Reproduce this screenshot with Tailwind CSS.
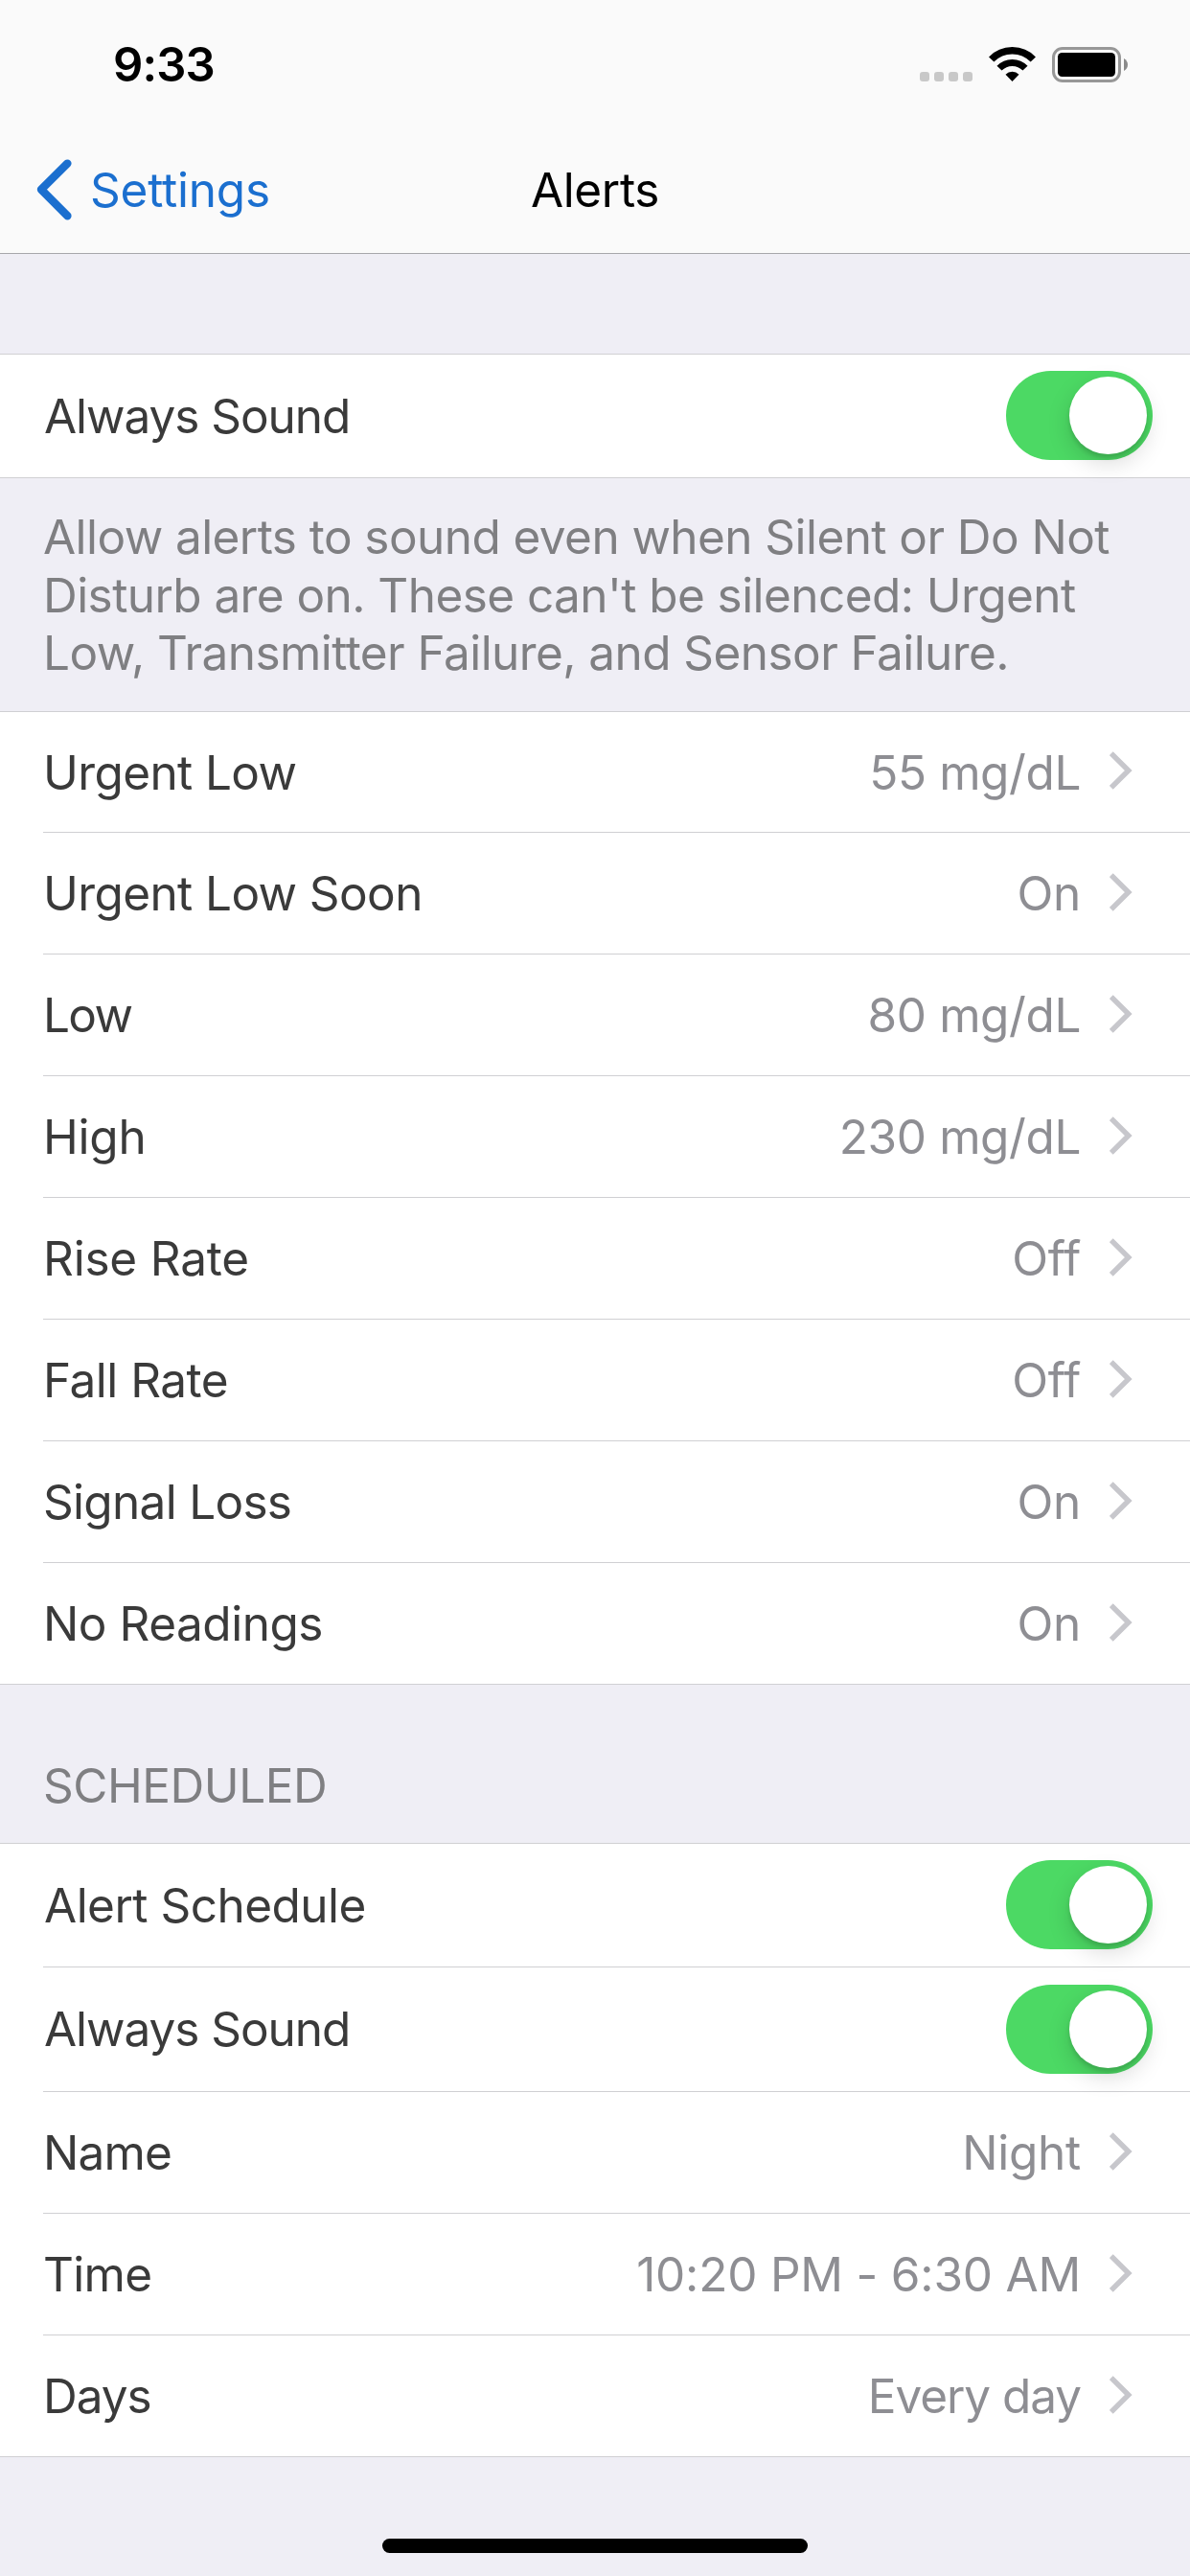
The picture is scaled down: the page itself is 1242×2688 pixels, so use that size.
<!DOCTYPE html>
<html lang="en">
  <head>
    <meta charset="UTF-8" />
    <title>Alerts</title>
    <meta name="viewport" content="width=device-width, initial-scale=1.0" />
    <script src="https://cdn.jsdelivr.net/npm/@tailwindcss/browser@4"></script>
  </head>

  <body
    class="bg-[#efeef5] text-[49.5px] text-[#3a3a3a]"
    style="font-family: Inter, 'Liberation Sans', sans-serif"
  >
    <!-- Shared icons -->
    <svg class="hidden">
      <symbol id="chevron" viewBox="0 0 24 40">
        <path d="M1.8 2.2 L19.8 20 L1.8 37.8" fill="none" stroke="#c7c7cc" stroke-width="5.4" />
      </symbol>
    </svg>

    <div class="w-[1242px] h-[2688px] flex flex-col overflow-hidden whitespace-nowrap">
      <!-- Header -->
      <header class="h-[265px] shrink-0 bg-[#fafafa] border-b border-[#a7a7ab] text-black">
        <div class="h-[132px] flex items-start justify-between pt-[49px] pl-[118px] pr-[65px]">
          <span class="text-[49px] leading-[38px] font-semibold tracking-[-0.9px]">9:33</span>
          <div class="flex">
            <div class="flex gap-[5px] pt-[26px]">
              <i class="size-[10px] rounded-[3px] bg-[#c8c8c8]"></i>
              <i class="size-[10px] rounded-[3px] bg-[#c8c8c8]"></i>
              <i class="size-[10px] rounded-[3px] bg-[#c8c8c8]"></i>
              <i class="size-[10px] rounded-[3px] bg-[#c8c8c8]"></i>
            </div>
            <svg class="ml-[17px] w-[49px] h-[37px]" viewBox="0 0 49 37">
              <path d="M2.7 13 A30.2 30.2 0 0 1 46.3 13" fill="none" stroke="#000" stroke-width="7.4" />
              <path d="M11 22.2 A18.6 18.6 0 0 1 38 22.2" fill="none" stroke="#000" stroke-width="7" />
              <path d="M17.5 28.8 A9.6 9.6 0 0 1 31.5 28.8 L24.5 36 Z" />
            </svg>
            <svg class="ml-[17px] w-[79px] h-[37px]" viewBox="0 0 79 37">
              <rect x="1.5" y="1.5" width="69" height="34" rx="9.5" fill="none" stroke="#979797" stroke-width="3" />
              <rect x="6" y="6" width="60" height="25" rx="4.5" />
              <path d="M75 12 Q79 14.5 79 18.5 Q79 22.5 75 25 Z" fill="#8a8a8a" />
            </svg>
          </div>
        </div>
        <div class="h-[132px] grid grid-cols-[1fr_auto_1fr] items-center">
          <a class="flex items-center pl-[38px] text-[#1b6fcf]">
            <svg class="w-[38px] h-[64px]" viewBox="0 0 38 64">
              <path d="M32.4 4.6 L5 31.8 L32.4 59.2" fill="none" stroke="#1b6fcf" stroke-width="8.4" stroke-linecap="round" stroke-linejoin="round" />
            </svg>
            <span class="ml-[18px] tracking-[-0.2px]">Settings</span>
          </a>
          <h1 class="tracking-[-0.36px]">Alerts</h1>
        </div>
      </header>

      <!-- Always Sound -->
      <section class="mt-[104px] shrink-0 bg-white border-y border-[#d0d0d3]">
        <div class="h-[128px] flex items-center justify-between pl-[46px] pr-[39px]">
          <span class="tracking-[-1.05px]">Always Sound</span>
          <div class="mb-px w-[153px] h-[93px] rounded-full bg-[#4cd964] p-[6px] flex justify-end">
            <span class="size-[81px] rounded-full bg-white shadow-[0_9px_24px_rgba(0,0,0,0.15),0_4px_4px_rgba(0,0,0,0.12)]"></span>
          </div>
        </div>
      </section>
      <p class="h-[243px] shrink-0 pt-[31px] pl-[45px] leading-[60.5px] tracking-[-0.57px] text-[#7f7f82]">
        Allow alerts to sound even when Silent or Do Not<br />
        Disturb are on. These can't be silenced: Urgent<br />
        Low, Transmitter Failure, and Sensor Failure.
      </p>

      <!-- Alert list -->
      <ul class="shrink-0 bg-white border-y border-[#d0d0d3]">
        <li class="pl-[45px]">
          <div class="h-[126px] flex items-center border-b border-[#d0d0d3] pt-px pr-[60px]">
            <span class="tracking-[-0.62px]">Urgent Low</span>
            <span class="ml-auto tracking-[-0.4px] text-[#8e8e93]">55 mg/dL</span>
            <svg class="ml-[30px] mb-1 w-[24px] h-[40px]"><use href="#chevron" /></svg>
          </div>
        </li>
        <li class="pl-[45px]">
          <div class="h-[127px] flex items-center border-b border-[#d0d0d3] pt-px pr-[60px]">
            <span class="tracking-[-0.6px]">Urgent Low Soon</span>
            <span class="ml-auto tracking-[-0.25px] text-[#8e8e93]">On</span>
            <svg class="ml-[30px] mb-1 w-[24px] h-[40px]"><use href="#chevron" /></svg>
          </div>
        </li>
        <li class="pl-[45px]">
          <div class="h-[127px] flex items-center border-b border-[#d0d0d3] pt-px pr-[60px]">
            <span class="tracking-[-1.7px]">Low</span>
            <span class="ml-auto tracking-[-0.4px] text-[#8e8e93]">80 mg/dL</span>
            <svg class="ml-[30px] mb-1 w-[24px] h-[40px]"><use href="#chevron" /></svg>
          </div>
        </li>
        <li class="pl-[45px]">
          <div class="h-[127px] flex items-center border-b border-[#d0d0d3] pt-px pr-[60px]">
            <span class="tracking-[-0.2px]">High</span>
            <span class="ml-auto tracking-[-0.4px] text-[#8e8e93]">230 mg/dL</span>
            <svg class="ml-[30px] mb-1 w-[24px] h-[40px]"><use href="#chevron" /></svg>
          </div>
        </li>
        <li class="pl-[45px]">
          <div class="h-[127px] flex items-center border-b border-[#d0d0d3] pt-px pr-[60px]">
            <span class="tracking-[-0.2px]">Rise Rate</span>
            <span class="ml-auto tracking-[-0.25px] text-[#8e8e93]">Off</span>
            <svg class="ml-[30px] mb-1 w-[24px] h-[40px]"><use href="#chevron" /></svg>
          </div>
        </li>
        <li class="pl-[45px]">
          <div class="h-[127px] flex items-center border-b border-[#d0d0d3] pt-px pr-[60px]">
            <span class="tracking-[-0.5px]">Fall Rate</span>
            <span class="ml-auto tracking-[-0.25px] text-[#8e8e93]">Off</span>
            <svg class="ml-[30px] mb-1 w-[24px] h-[40px]"><use href="#chevron" /></svg>
          </div>
        </li>
        <li class="pl-[45px]">
          <div class="h-[127px] flex items-center border-b border-[#d0d0d3] pt-px pr-[60px]">
            <span class="tracking-[-0.7px]">Signal Loss</span>
            <span class="ml-auto tracking-[-0.25px] text-[#8e8e93]">On</span>
            <svg class="ml-[30px] mb-1 w-[24px] h-[40px]"><use href="#chevron" /></svg>
          </div>
        </li>
        <li class="pl-[45px]">
          <div class="h-[126px] flex items-center pt-px pr-[60px]">
            <span class="tracking-[-0.47px]">No Readings</span>
            <span class="ml-auto tracking-[-0.25px] text-[#8e8e93]">On</span>
            <svg class="ml-[30px] mb-1 w-[24px] h-[40px]"><use href="#chevron" /></svg>
          </div>
        </li>
      </ul>

      <!-- Scheduled -->
      <h2 class="h-[165px] shrink-0 pt-[75px] pl-[45px] leading-[60px] tracking-[-0.47px] text-[#7f7f82]">SCHEDULED</h2>
      <ul class="shrink-0 bg-white border-y border-[#d0d0d3]">
        <li class="pl-[45px]">
          <div class="h-[129px] flex items-center justify-between border-b border-[#d0d0d3] pl-px pr-[39px]">
            <span class="tracking-[-0.52px]">Alert Schedule</span>
            <div class="mb-px w-[153px] h-[93px] rounded-full bg-[#4cd964] p-[6px] flex justify-end">
              <span class="size-[81px] rounded-full bg-white shadow-[0_9px_24px_rgba(0,0,0,0.15),0_4px_4px_rgba(0,0,0,0.12)]"></span>
            </div>
          </div>
        </li>
        <li class="pl-[45px]">
          <div class="h-[130px] flex items-center justify-between border-b border-[#d0d0d3] pl-px pr-[39px]">
            <span class="tracking-[-1.05px]">Always Sound</span>
            <div class="w-[153px] h-[93px] rounded-full bg-[#4cd964] p-[6px] flex justify-end">
              <span class="size-[81px] rounded-full bg-white shadow-[0_9px_24px_rgba(0,0,0,0.15),0_4px_4px_rgba(0,0,0,0.12)]"></span>
            </div>
          </div>
        </li>
        <li class="pl-[45px]">
          <div class="h-[127px] flex items-center border-b border-[#d0d0d3] pt-px pr-[60px]">
            <span class="tracking-[-0.8px]">Name</span>
            <span class="ml-auto tracking-[-0.25px] text-[#8e8e93]">Night</span>
            <svg class="ml-[30px] mb-1 w-[24px] h-[40px]"><use href="#chevron" /></svg>
          </div>
        </li>
        <li class="pl-[45px]">
          <div class="h-[127px] flex items-center border-b border-[#d0d0d3] pt-px pr-[60px]">
            <span class="tracking-[-0.7px]">Time</span>
            <span class="ml-auto tracking-[-0.2px] text-[#8e8e93]">10:20 PM - 6:30 AM</span>
            <svg class="ml-[30px] mb-1 w-[24px] h-[40px]"><use href="#chevron" /></svg>
          </div>
        </li>
        <li class="pl-[45px]">
          <div class="h-[126px] flex items-center pt-px pr-[60px]">
            <span class="tracking-[-1px]">Days</span>
            <span class="ml-auto tracking-[-1.06px] text-[#8e8e93]">Every day</span>
            <svg class="ml-[30px] mb-1 w-[24px] h-[40px]"><use href="#chevron" /></svg>
          </div>
        </li>
      </ul>

      <!-- Home indicator -->
      <div class="mt-auto mb-6 mx-auto w-[444px] h-[15px] shrink-0 rounded-full bg-black"></div>
    </div>
  </body>
</html>
